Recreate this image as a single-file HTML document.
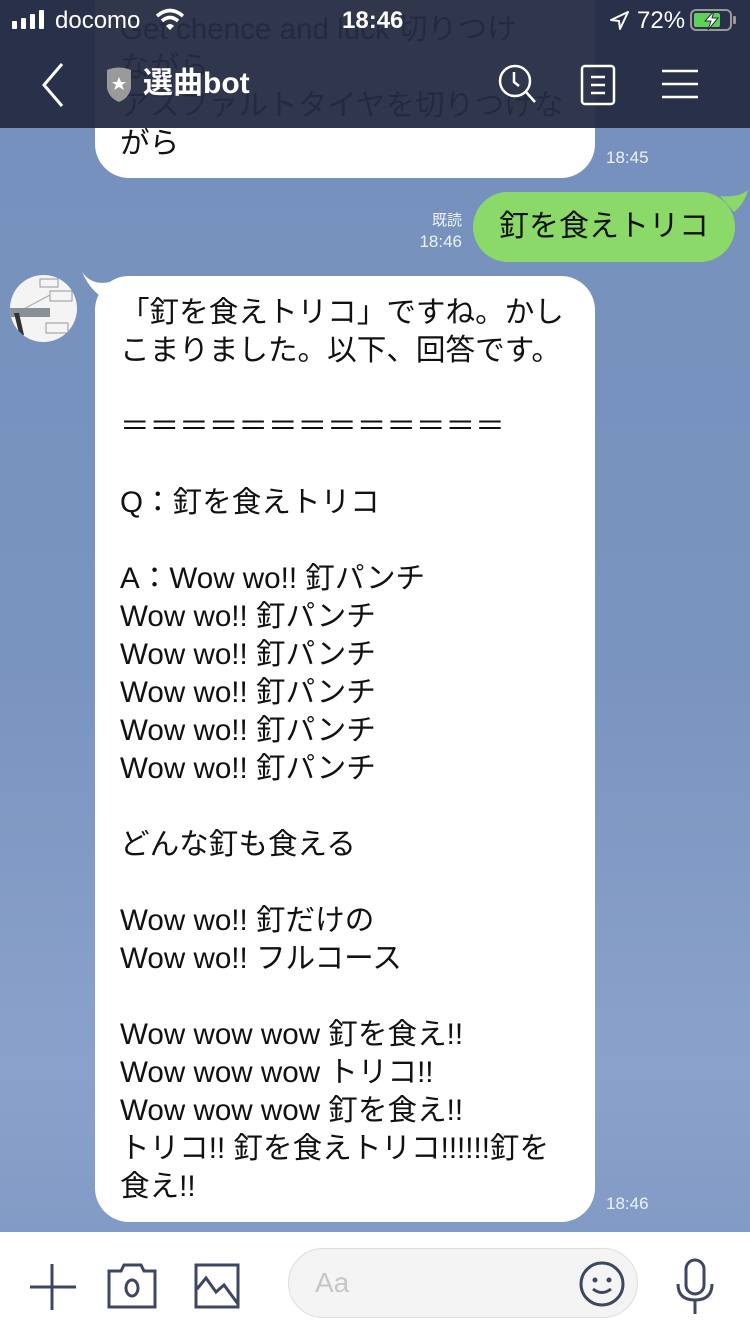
<!DOCTYPE html>
<html><head><meta charset="utf-8"><style>
*{margin:0;padding:0;box-sizing:border-box}
body{width:750px;height:1334px;overflow:hidden;position:relative;font-family:"Liberation Sans","Noto Sans CJK JP",sans-serif;background:linear-gradient(180deg,#7690bd 0%,#7a94c0 50%,#8aa2cb 80%,#7d96c2 100%);}
.bub{position:absolute;background:#fff;border-radius:34px;font-size:29.6px;line-height:38px;color:#111;padding:18px 0 0 25px;white-space:pre}
.time{position:absolute;color:#eef2f8;font-size:17px}
.hdr{position:absolute;left:0;top:0;width:750px;height:128px;background:rgba(37,43,66,0.95)}
.st{position:absolute;color:#fff;font-size:24px;top:6px}
.bar{position:absolute;left:0;top:1232px;width:750px;height:102px;background:#fff}
</style></head><body>
<div class="bub" style="left:95px;top:-40px;width:500px;height:218px;padding-top:51px">Get chence and luck 切りつけ
ながら
アスファルトタイヤを切りつけな
がら</div>
<div class="time" style="left:606px;top:148px">18:45</div>

<div class="time" style="left:412px;top:210px;text-align:right;width:50px;font-size:15px;line-height:21px">既読<br><span style="font-size:17px">18:46</span></div>
<div style="position:absolute;left:473px;top:192px;width:262px;height:70px;background:#8bd968;border-radius:35px;font-size:30px;line-height:70px;text-align:center;color:#111">釘を食えトリコ</div>
<svg style="position:absolute;left:720px;top:190px" width="30" height="30"><path d="M0 6 Q18 8 28 0 Q24 14 14 22 Z" fill="#8bd968"/></svg>

<div style="position:absolute;left:10px;top:275px;width:67px;height:67px;border-radius:50%;background:#f4f4f4;overflow:hidden">
<svg width="67" height="67"><rect x="30" y="4" width="18" height="8" fill="none" stroke="#999" stroke-width="1"/><rect x="40" y="16" width="22" height="10" fill="none" stroke="#999"/><rect x="36" y="48" width="22" height="10" fill="none" stroke="#999"/><line x1="10" y1="36" x2="40" y2="20" stroke="#aaa"/><rect x="0" y="33" width="40" height="9" fill="#8a9098"/><path d="M4 38 L10 62 L14 60 L9 38Z" fill="#333"/></svg></div>
<svg style="position:absolute;left:80px;top:272px" width="30" height="30"><path d="M2 0 Q12 14 30 10 L28 28 Q12 22 2 0Z" fill="#fff"/></svg>
<div class="bub" style="left:95px;top:276px;width:500px;height:946px">「釘を食えトリコ」ですね。かし
こまりました。以下、回答です。

＝＝＝＝＝＝＝＝＝＝＝＝＝

Q：釘を食えトリコ

A：Wow wo!! 釘パンチ
Wow wo!! 釘パンチ
Wow wo!! 釘パンチ
Wow wo!! 釘パンチ
Wow wo!! 釘パンチ
Wow wo!! 釘パンチ

どんな釘も食える

Wow wo!! 釘だけの
Wow wo!! フルコース

Wow wow wow 釘を食え!!
Wow wow wow トリコ!!
Wow wow wow 釘を食え!!
トリコ!! 釘を食えトリコ!!!!!!釘を
食え!!</div>
<div class="time" style="left:606px;top:1194px">18:46</div>

<div class="hdr"></div>
<svg style="position:absolute;left:12px;top:10px" width="40" height="20"><rect x="0" y="11" width="5" height="8" rx="1" fill="#fff"/><rect x="9" y="8" width="5" height="11" rx="1" fill="#fff"/><rect x="18" y="4" width="5" height="15" rx="1" fill="#fff"/><rect x="27" y="0" width="5" height="19" rx="1" fill="#fff"/></svg>
<div class="st" style="left:55px;top:7px">docomo</div>
<svg style="position:absolute;left:155px;top:8px" width="30" height="24"><path d="M2 8 Q15 -3 28 8" stroke="#fff" stroke-width="3.5" fill="none"/><path d="M7 13 Q15 6 23 13" stroke="#fff" stroke-width="3.5" fill="none"/><path d="M11 18 L15 22 L19 18 Q15 14 11 18Z" fill="#fff"/></svg>
<div class="st" style="left:342px;top:7px;font-weight:bold">18:46</div>
<svg style="position:absolute;left:608px;top:10px" width="24" height="22"><path d="M20 2 L3 10 L11 11 L12 19 Z" stroke="#fff" stroke-width="2" fill="none" stroke-linejoin="round"/></svg>
<div class="st" style="left:637px;top:7px">72%</div>
<svg style="position:absolute;left:690px;top:8px" width="48" height="26"><rect x="1" y="2" width="40" height="20" rx="5" stroke="#999" stroke-width="2" fill="none"/><rect x="4" y="5" width="26" height="14" rx="2" fill="#5fd05a"/><rect x="43" y="8" width="3" height="8" rx="1" fill="#999"/><path d="M24 3 L15 13 L21 13 L18 22 L28 10 L22 10Z" fill="#fff" stroke="#262c42" stroke-width="1"/></svg>
<svg style="position:absolute;left:40px;top:62px" width="30" height="46"><path d="M22 2 L4 23 L22 44" stroke="#fff" stroke-width="3" fill="none"/></svg>
<svg style="position:absolute;left:105px;top:66px" width="30" height="38"><path d="M2 4 Q14 -1 26 4 L26 22 Q24 32 14 36 Q4 32 2 22Z" fill="#9a9a9a"/><path d="M14 11 L16 16 L21 16 L17 19 L19 24 L14 21 L9 24 L11 19 L7 16 L12 16Z" fill="#fff"/></svg>
<div style="position:absolute;left:143px;top:64px;color:#fff;font-size:30px;font-weight:bold;line-height:40px">選曲bot</div>
<svg style="position:absolute;left:496px;top:62px" width="44" height="44"><circle cx="19" cy="19" r="15" stroke="#fff" stroke-width="2.5" fill="none"/><path d="M18 10 L18 20 L23 24" stroke="#fff" stroke-width="2.5" fill="none"/><path d="M30 30 L39 40" stroke="#fff" stroke-width="2.5"/></svg>
<svg style="position:absolute;left:580px;top:64px" width="40" height="42"><rect x="2" y="2" width="32" height="38" rx="3" stroke="#fff" stroke-width="2.5" fill="none"/><path d="M11 13H25M11 21H25M11 29H25" stroke="#fff" stroke-width="2.5"/></svg>
<svg style="position:absolute;left:660px;top:68px" width="40" height="34"><path d="M2 3H38M2 16H38M2 29H38" stroke="#fff" stroke-width="2.5"/></svg>

<div class="bar">
<svg style="position:absolute;left:28px;top:30px" width="50" height="50"><path d="M24 2V48M2 25H48" stroke="#3f4660" stroke-width="3"/></svg>
<svg style="position:absolute;left:106px;top:31px" width="52" height="46"><path d="M3 8H15L18 2H35L38 8H49V44H3Z" stroke="#3f4660" stroke-width="3" fill="none"/><ellipse cx="26" cy="25" rx="6" ry="8" stroke="#3f4660" stroke-width="3" fill="none"/></svg>
<svg style="position:absolute;left:194px;top:31px" width="46" height="46"><rect x="2" y="2" width="42" height="42" stroke="#3f4660" stroke-width="3" fill="none"/><path d="M3 26L12 15L22 29L30 22L44 41" stroke="#3f4660" stroke-width="3" fill="none"/></svg>
<div style="position:absolute;left:288px;top:16px;width:350px;height:70px;border-radius:35px;background:#f4f4f4;border:1px solid #ddd"></div>
<div style="position:absolute;left:315px;top:33px;font-size:28px;color:#c6c6c6;line-height:36px">Aa</div>
<svg style="position:absolute;left:578px;top:28px" width="48" height="48"><ellipse cx="24" cy="24" rx="21" ry="21" stroke="#3f4660" stroke-width="3" fill="none"/><circle cx="17" cy="20" r="2.5" fill="#3f4660"/><circle cx="31" cy="20" r="2.5" fill="#3f4660"/><path d="M15 29Q24 36 33 29" stroke="#3f4660" stroke-width="3" fill="none"/></svg>
<svg style="position:absolute;left:674px;top:26px" width="42" height="56"><rect x="12" y="2" width="18" height="34" rx="9" stroke="#3f4660" stroke-width="3" fill="none"/><path d="M4 26Q4 42 21 42Q38 42 38 26M21 42V56" stroke="#3f4660" stroke-width="3" fill="none"/></svg>
</div>
</body></html>
